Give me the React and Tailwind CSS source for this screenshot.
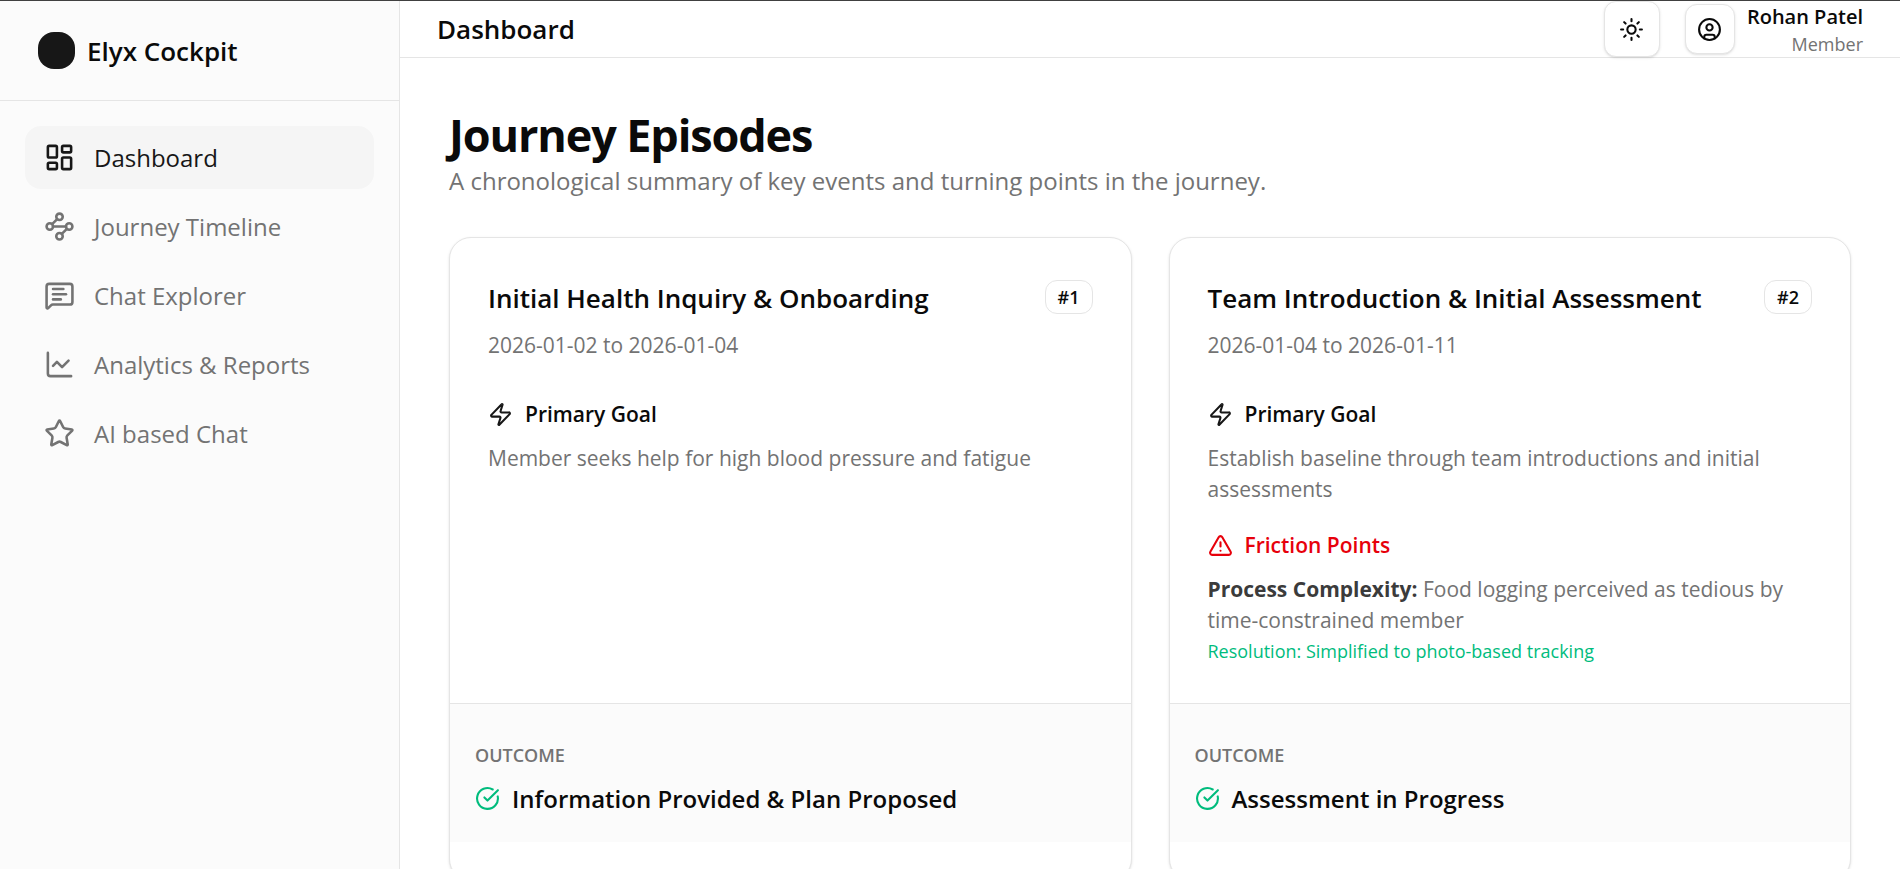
import {
  ChartLine,
  CircleCheckBig,
  CircleUser,
  LayoutDashboard,
  MessageSquareText,
  Star,
  Sun,
  TriangleAlert,
  Waypoints,
  Zap,
} from "lucide-react";

const navItems = [
  { label: "Dashboard", icon: LayoutDashboard, active: true },
  { label: "Journey Timeline", icon: Waypoints },
  { label: "Chat Explorer", icon: MessageSquareText },
  { label: "Analytics & Reports", icon: ChartLine },
  { label: "AI based Chat", icon: Star },
];

const episodes = [
  {
    number: 1,
    title: "Initial Health Inquiry & Onboarding",
    dates: "2026-01-02 to 2026-01-04",
    goal: "Member seeks help for high blood pressure and fatigue",
    outcome: "Information Provided & Plan Proposed",
  },
  {
    number: 2,
    title: "Team Introduction & Initial Assessment",
    dates: "2026-01-04 to 2026-01-11",
    goal: "Establish baseline through team introductions and initial assessments",
    friction: {
      label: "Process Complexity:",
      text: "Food logging perceived as tedious by time-constrained member",
      resolution: "Resolution: Simplified to photo-based tracking",
    },
    outcome: "Assessment in Progress",
  },
];

function Sidebar() {
  return (
    <aside className="flex w-[400px] shrink-0 flex-col border-r border-neutral-200 bg-[#fbfbfb]">
      <div className="flex h-[100px] items-center gap-3 border-b border-neutral-200 px-[38px]">
        <span className="size-[37px] rounded-2xl bg-neutral-900" />
        <span className="pt-0.5 text-[26px] font-semibold">Elyx Cockpit</span>
      </div>
      <nav className="flex flex-col gap-1.5 p-[25px]">
        {navItems.map(({ label, icon: Icon, active }) => (
          <a
            key={label}
            href="#"
            aria-current={active ? "page" : undefined}
            className={
              active
                ? "flex h-[63px] items-center gap-[19px] rounded-2xl bg-neutral-100 px-[19px] text-[24px] text-neutral-900"
                : "flex h-[63px] items-center gap-[19px] rounded-2xl px-[19px] text-[24px] text-neutral-500"
            }
          >
            <Icon size={31} />
            {label}
          </a>
        ))}
      </nav>
    </aside>
  );
}

function Header() {
  return (
    <header className="flex h-[57px] shrink-0 items-center justify-between border-b border-neutral-200 px-[37px]">
      <h1 className="text-[26px] font-semibold">Dashboard</h1>
      <div className="flex items-center gap-[25px]">
        <button
          type="button"
          aria-label="Toggle theme"
          className="flex size-14 items-center justify-center rounded-xl border border-neutral-200 bg-white shadow-sm"
        >
          <Sun size={25} />
        </button>
        <div className="flex items-center gap-3">
          <button
            type="button"
            aria-label="Account"
            className="flex size-[50px] items-center justify-center rounded-xl border border-neutral-200 bg-white shadow-sm"
          >
            <CircleUser size={25} />
          </button>
          <div className="flex flex-col pt-0.5 text-right">
            <span className="text-[20px] leading-7 font-semibold">Rohan Patel</span>
            <span className="text-[18px] leading-[26px] text-neutral-500">Member</span>
          </div>
        </div>
      </div>
    </header>
  );
}

function EpisodeCard({ episode }) {
  const { number, title, dates, goal, friction, outcome } = episode;
  return (
    <article className="flex flex-col rounded-[22px] border border-neutral-200 bg-white pt-[38px] pb-[38px] shadow-sm">
      <div className="flex flex-1 flex-col px-[38px] pb-9">
        <div className="flex items-center justify-between">
          <h3 className="text-[26px] leading-[44px] font-semibold">{title}</h3>
          <span className="mb-0.5 flex h-[34px] items-center rounded-xl border border-neutral-200 px-3 text-[18px] font-semibold">
            #{number}
          </span>
        </div>
        <p className="mt-2.5 text-[21px] leading-[31px] text-neutral-500">{dates}</p>
        <section className="mt-[38px]">
          <h4 className="flex items-center gap-3 text-[21px] leading-[31px] font-semibold">
            <Zap size={25} className="text-neutral-900" />
            Primary Goal
          </h4>
          <p className="mt-[13px] text-[21px] leading-[31px] text-neutral-500">{goal}</p>
        </section>
        {friction && (
          <section className="mt-[25px]">
            <h4 className="flex items-center gap-3 text-[21px] leading-[31px] font-semibold text-[#e7000b]">
              <TriangleAlert size={25} />
              Friction Points
            </h4>
            <p className="mt-[13px] text-[21px] leading-[31px] text-neutral-500">
              <strong className="font-bold text-[#3b3b3b]">{friction.label}</strong> {friction.text}
            </p>
            <p className="text-[18px] leading-[31px] text-[#00bc7d]">{friction.resolution}</p>
          </section>
        )}
      </div>
      <div className="flex flex-col gap-3 border-t border-neutral-200 bg-[#fbfbfb] px-[25px] pt-[39px] pb-[25px]">
        <p className="text-[18px] leading-[25px] font-semibold text-neutral-500">OUTCOME</p>
        <p className="flex items-center gap-3 text-[24px] leading-[37px] font-semibold">
          <CircleCheckBig size={25} className="text-[#00bc7d]" />
          {outcome}
        </p>
      </div>
    </article>
  );
}

export default function App() {
  return (
    <div className="flex h-screen overflow-hidden border-t border-neutral-700 bg-white font-['Open_Sans',sans-serif] text-neutral-950">
      <Sidebar />
      <div className="flex min-w-0 flex-1 flex-col">
        <Header />
        <main className="flex-1 overflow-y-auto px-[49px] py-[50px] [scrollbar-width:none]">
          <h2 className="text-[45px] leading-[54px] font-bold tracking-tight">Journey Episodes</h2>
          <p className="text-[24px] leading-[38px] text-neutral-500">
            A chronological summary of key events and turning points in the journey.
          </p>
          <div className="mt-[37px] grid grid-cols-2 gap-[37px]">
            {episodes.map((episode) => (
              <EpisodeCard key={episode.number} episode={episode} />
            ))}
          </div>
        </main>
      </div>
    </div>
  );
}
